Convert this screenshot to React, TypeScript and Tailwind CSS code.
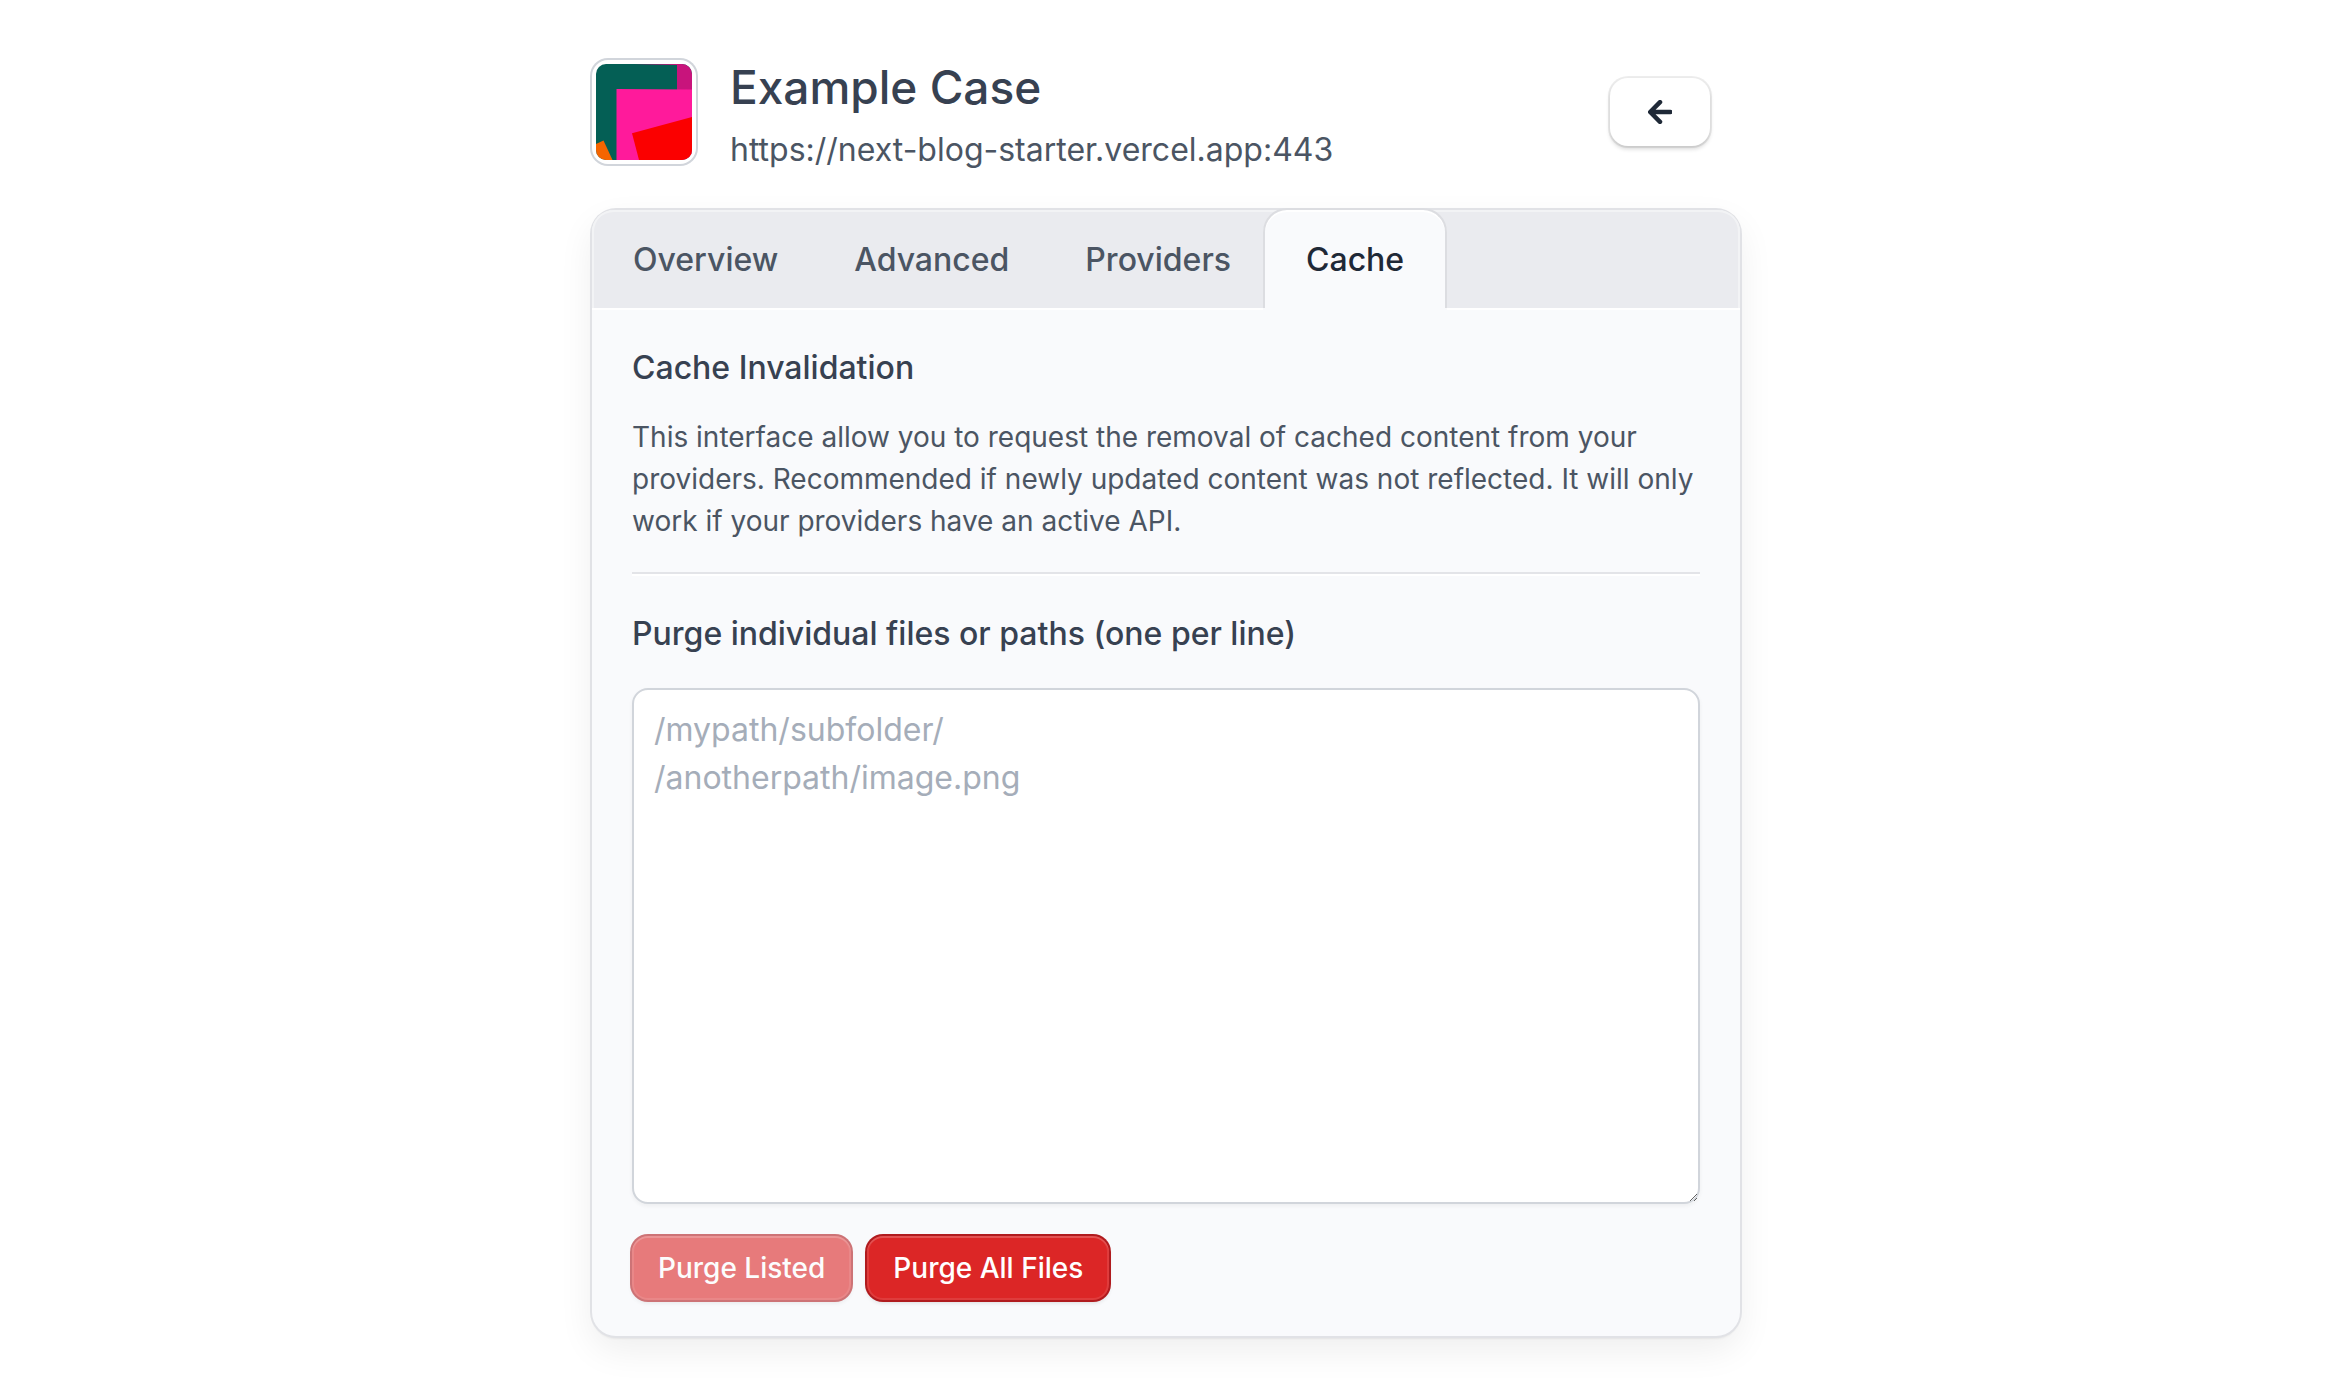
import type { ReactNode } from "react";

const tabs = ["Overview", "Advanced", "Providers", "Cache"];
const activeTab = "Cache";

function Avatar() {
  return (
    <div className="shrink-0 rounded-[16px] bg-white p-1 ring-2 ring-[#d1d5db]">
      <svg viewBox="0 0 96 96" className="size-24 rounded-[10px]" aria-hidden="true">
        <rect width="96" height="96" fill="#045f55" />
        <path d="M38 0H96V26H81V1Z" fill="#c8147c" />
        <path d="M20.5 25L96 25.5V96H20.5Z" fill="#ff1a9b" />
        <path d="M36 69.300L96 53V96H43Z" fill="#fb0000" />
        <path d="M0 80L7.500 76.500L16.500 96H0Z" fill="#f56500" />
      </svg>
    </div>
  );
}

function Tab({ label, active }: { label: string; active: boolean }) {
  return active ? (
    <button
      type="button"
      role="tab"
      aria-selected="true"
      className="relative -ml-1.5 -mt-0.5 rounded-t-[24px] border-x-2 border-t-2 border-[#dcdde1] bg-[#f9fafc] px-[41px] pt-0.5 text-[32px] font-medium leading-[48px] text-[#1f2937] shadow-[0_2px_0_#f9fafc,inset_0_2px_0_#fff]"
    >
      {label}
    </button>
  ) : (
    <button
      type="button"
      role="tab"
      aria-selected="false"
      className="px-[38px] pt-0.5 text-[32px] font-medium leading-[48px] text-[#4b5563]"
    >
      {label}
    </button>
  );
}

function DangerButton({ children, disabled }: { children: ReactNode; disabled?: boolean }) {
  return (
    <button
      type="button"
      disabled={disabled}
      className="h-16 rounded-[16px] bg-[#dc2626] px-[26px] text-[28px] font-medium leading-[40px] text-white shadow-[0_0_0_2px_#b01b1e,inset_0_0_0_2px_rgba(255,255,255,0.1),inset_0_2px_0_rgba(255,255,255,0.12),0_3px_4px_rgba(0,0,0,0.12)] disabled:opacity-60"
    >
      {children}
    </button>
  );
}

export default function App() {
  return (
    <div className="min-h-screen bg-white pb-[62px] pl-0.5 pt-[60px] font-['Inter',sans-serif]">
      <main className="mx-auto w-full max-w-[1148px]">
        <header className="flex items-start gap-[34px]">
          <Avatar />
          <div className="min-w-0 flex-1">
            <h1 className="text-[46px] font-medium leading-[54px] text-[#374151]">Example Case</h1>
            <p className="mt-3 text-[32px] leading-[48px] text-[#4b5563]">
              https://next-blog-starter.vercel.app:443
            </p>
          </div>
          <button
            type="button"
            aria-label="Back"
            className="mr-[30px] mt-[18px] flex h-[68px] w-[100px] shrink-0 items-center justify-center rounded-[18px] bg-white text-[#1f2937] shadow-[0_0_0_2px_rgba(0,0,0,0.07),0_3px_4px_rgba(0,0,0,0.16)]"
          >
            <svg viewBox="0 0 24 24" className="size-6" fill="none" stroke="currentColor" strokeWidth="4.500" strokeLinecap="round" strokeLinejoin="round" aria-hidden="true">
              <path d="M12 2.200L2.200 12L12 21.800M2.800 12H22.500" />
            </svg>
          </button>
        </header>

        <section className="mt-9 rounded-[24px] bg-[#f9fafc] shadow-[0_0_0_2px_#e1e2e6,0_3px_2px_rgba(0,0,0,0.06),0_14px_36px_rgba(0,0,0,0.07)]">
          <div
            role="tablist"
            className="flex h-[98px] rounded-t-[22px] bg-[#eaebef] pl-[3px] shadow-[0_2px_0_#fff,inset_0_2px_0_#f2f3f5,inset_2px_0_0_#f2f3f5,inset_-2px_0_0_#f2f3f5]"
          >
            {tabs.map((label) => (
              <Tab key={label} label={label} active={label === activeTab} />
            ))}
          </div>
          <div className="px-10 pb-9 pt-9">
            <h2 className="text-[32px] font-medium leading-[48px] text-[#374151]">Cache Invalidation</h2>
            <p className="mt-6 text-[28px] leading-[42px] text-[#4b5563]">
              This interface allow you to request the removal of cached content from your providers. Recommended if newly
              updated content was not reflected. It will only work if your providers have an active API.
            </p>
            <hr className="mt-[30px] border-t-2 border-[#e3e4e8] shadow-[0_2px_0_#fff]" />
            <label htmlFor="paths" className="mt-9 block text-[32px] font-medium leading-[48px] text-[#374151]">
              Purge individual files or paths (one per line)
            </label>
            <textarea
              id="paths"
              rows={10}
              placeholder={"/mypath/subfolder/\n/anotherpath/image.png"}
              className="mt-[30px] block w-full rounded-[16px] border-2 border-[#d1d5db] bg-white px-5 py-4 text-[32px] leading-[48px] text-[#374151] shadow-[0_2px_4px_rgba(0,0,0,0.05)] placeholder:text-[#a5adb9]"
            />
            <div className="mt-8 flex flex-wrap gap-4">
              <DangerButton disabled>Purge Listed</DangerButton>
              <DangerButton>Purge All Files</DangerButton>
            </div>
          </div>
        </section>
      </main>
    </div>
  );
}
